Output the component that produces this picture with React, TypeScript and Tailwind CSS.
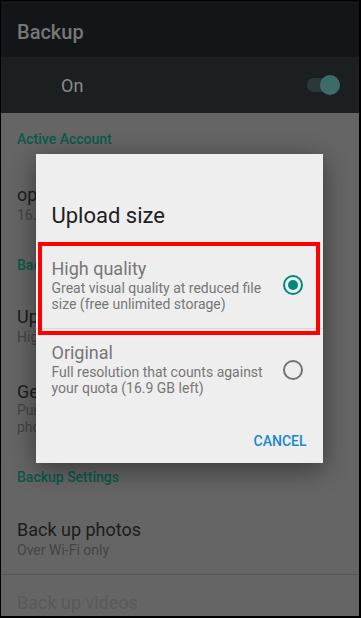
import React from 'react'

const font = { fontFamily: 'Roboto, "Noto Sans", sans-serif' }

function SectionHeader({ label, h }: { label: string; h: string }) {
  return (
    <div className={`${h} flex items-center px-4`}>
      <span className="whitespace-nowrap text-[14px] font-medium text-[#0b5a4a]">{label}</span>
    </div>
  )
}

function Item({ title, lines, h }: { title: string; lines: string[]; h: string }) {
  return (
    <div className={`${h} flex flex-col justify-center px-4`}>
      <p className="whitespace-nowrap text-[18px] leading-[20px] text-[#1c1c1c]">{title}</p>
      {lines.map((l) => (
        <p key={l} className="whitespace-nowrap text-[14px] leading-[20px] text-[#444444]">
          {l}
        </p>
      ))}
    </div>
  )
}

function Radio({ checked }: { checked: boolean }) {
  return checked ? (
    <div className="flex h-5 w-5 items-center justify-center rounded-full border-2 border-[#00897b]">
      <div className="h-[10px] w-[10px] rounded-full bg-[#00897b]" />
    </div>
  ) : (
    <div className="h-5 w-5 rounded-full border-2 border-[#737373]" />
  )
}

export default function App() {
  return (
    <div
      style={font}
      className="relative h-[618px] w-[361px] overflow-hidden border-t border-l border-r-2 border-b-2 border-black bg-[#656565]"
    >
      {/* Toolbar */}
      <div className="flex h-[56px] items-center bg-[#121619] px-4 pt-[5px]">
        <span className="text-[20px] font-medium text-[#777777]">Backup</span>
      </div>

      {/* On switch row */}
      <div className="flex h-[56px] items-center justify-between bg-[#1b1f22] pl-[60px] pr-[19px]">
        <span className="text-[18px] text-[#8a8a8a]">On</span>
        <div className="relative flex h-5 w-[33px] items-center">
          <div className="h-[14px] w-[28px] rounded-full bg-[#29393a]" />
          <div className="absolute right-0 top-0 h-5 w-5 rounded-full bg-[#3d6c68]" />
        </div>
      </div>

      {/* Settings list (dimmed) */}
      <SectionHeader label="Active Account" h="h-[53px]" />
      <Item title="optimistictest@gmail.com" lines={['16.9 GB of 17 GB left']} h="h-[76px] pt-[2px]" />
      <SectionHeader label="Backup Mode" h="h-[46px]" />
      <Item title="Upload size" lines={['High quality']} h="h-[77px]" />
      <div className="flex h-[87px] flex-col justify-center px-4">
        <p className="whitespace-nowrap text-[18px] leading-[20px] text-[#1c1c1c]">Get more storage</p>
        <p className="whitespace-nowrap text-[14px] leading-[17px] text-[#444444]">Purchase more storage to</p>
        <p className="whitespace-nowrap text-[14px] leading-[17px] text-[#444444]">photos in original size</p>
      </div>
      <SectionHeader label="Backup Settings" h="h-[50px]" />
      <Item title="Back up photos" lines={['Over Wi-Fi only']} h="h-[73px] border-b border-[#555555] pt-[3px]" />
      <div className="flex h-[54px] items-center px-4">
        <span className="text-[18px] text-[#595959]">Back up videos</span>
      </div>

      {/* Dialog */}
      <div className="absolute inset-0 flex items-center justify-center">
        <div className="relative mr-[2px] flex h-[309px] w-[287px] flex-col bg-[#eeeeee] shadow-[0_6px_24px_rgba(0,0,0,0.45)]">
          <div className="h-[88px] pl-4 pt-[48px]">
            <h2 className="text-[22px] leading-[28px] text-[#212121]">Upload size</h2>
          </div>

          <div className="flex h-[87px] items-center justify-between border-b border-[#dadada] pl-4 pr-[20px]">
            <div>
              <p className="text-[18px] leading-[20px] text-[#777777]">High quality</p>
              <p className="mt-[1px] text-[14px] leading-[16px] text-[#777777]">
                Great visual quality at reduced file
                <br />
                size (free unlimited storage)
              </p>
            </div>
            <Radio checked />
          </div>

          <div className="flex items-center justify-between pl-4 pr-[20px] pt-[14px]">
            <div>
              <p className="text-[18px] leading-[20px] text-[#777777]">Original</p>
              <p className="mt-[1px] text-[14px] leading-[16px] text-[#777777]">
                Full resolution that counts against
                <br />
                your quota (16.9 GB left)
              </p>
            </div>
            <Radio checked={false} />
          </div>

          <div className="mt-auto flex h-[48px] items-center justify-end pr-4 pt-[4px]">
            <span className="text-[14px] font-medium text-[#1b88d3]">CANCEL</span>
          </div>

          {/* Red highlight */}
          <div className="pointer-events-none absolute left-[2px] top-[88px] h-[93px] w-[282px] border-4 border-[#ff0000]" />
        </div>
      </div>
    </div>
  )
}
